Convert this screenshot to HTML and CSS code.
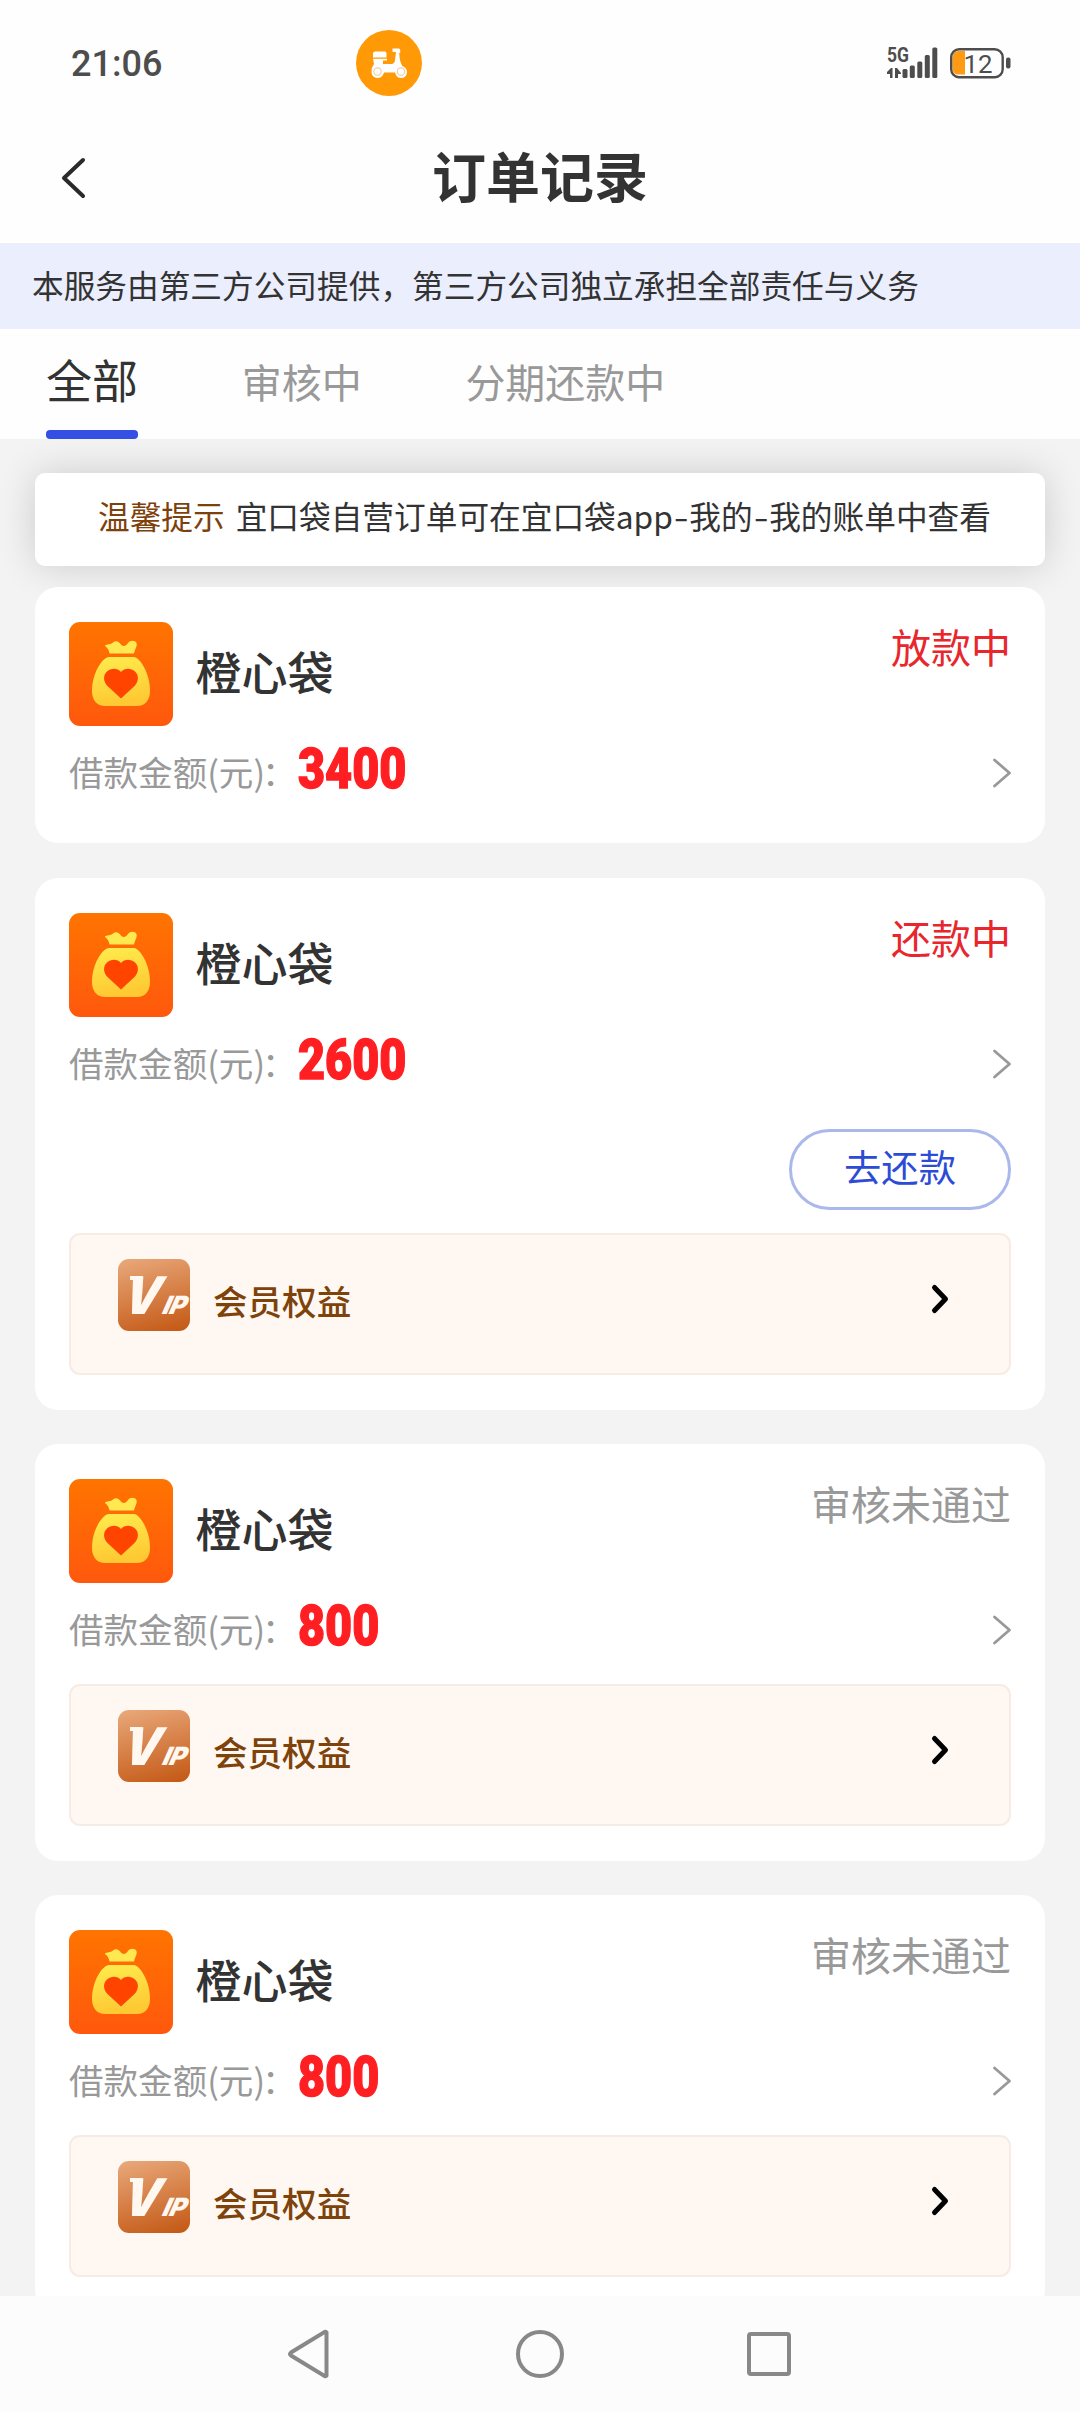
FILE: index.html
```
<!DOCTYPE html>
<html lang="zh-CN">
<head>
<meta charset="utf-8">
<title>订单记录</title>
<link rel="stylesheet" href="styles.css">
</head>
<body>
<svg class="defs" width="0" height="0" aria-hidden="true">
  <defs>
    <linearGradient id="orange" x1="0" y1="0" x2="0" y2="1"><stop offset="0" stop-color="#ff7400"/><stop offset="1" stop-color="#ff580d"/></linearGradient>
    <linearGradient id="gold" x1="0" y1="0" x2="0.2" y2="1"><stop offset="0" stop-color="#ffec4e"/><stop offset="1" stop-color="#fec933"/></linearGradient>
  </defs>
  <symbol id="bag" viewBox="0 0 104 104">
    <rect width="104" height="104" rx="11" fill="url(#orange)"/>
    <path d="M36 24C36 21.800 40 23.500 44 20.500C47 18 50 19.500 52 22.500C54 25 57 24 59 21C61 18 66 18 67.500 21C68.500 24 66 27 65 31.500H40.500C40 28 38.500 26 36 24Z" fill="#ffe850"/>
    <path d="M40 35H65C70 35 81 50 81 69C81 78 76 84 68 84H36C28 84 23 78 23 69C23 50 34 35 40 35Z" fill="url(#gold)"/>
    <path d="M52 76.500L38.500 64C34 59.500 34 53 38 49.500C42.500 45.500 48.500 46 52 50C55.500 46 61.500 45.500 66 49.500C70 53 70 59.500 65.500 64Z" fill="#ff4400"/>
  </symbol>
  <symbol id="more" viewBox="0 0 20 32"><path d="M2.500 3L17.500 16L2.500 29" fill="none" stroke="#999" stroke-width="2.800" stroke-linecap="round" stroke-linejoin="round"/></symbol>
  <symbol id="enter" viewBox="0 0 20 32"><path d="M4.500 4.500L15.500 16L4.500 27.500" fill="none" stroke="#000" stroke-width="5" stroke-linecap="round" stroke-linejoin="round"/></symbol>
</svg>

<div class="screen">
  <header class="status-bar">
    <span class="clock">21:06</span>
    <svg class="scooter" viewBox="0 0 66 66">
      <circle cx="33" cy="33" r="33" fill="#ff9905"/>
      <path d="M17 27.500V23.500Q17 21.500 19.500 21.500H29Q30.500 21.500 30.500 23.500V27.500ZM17 28.800H31V30.500H27V34H35.500Q38.500 34 39 30L40 22H36.500V18.500H43Q44 18.500 44.200 20V23H43.200Q43.500 32 46.500 36Q51 38 51 42Q50.500 48 45 48Q40.500 48 39 42.500H28Q26.500 48 21 48Q15.500 47 15.500 42Q15.500 37 18 34Z" fill="#fff"/>
      <circle cx="21.500" cy="41.500" r="3.700" fill="#fff" stroke="#f3cfa0" stroke-width="1.200"/>
      <circle cx="45" cy="41.500" r="3.700" fill="#fff" stroke="#f3cfa0" stroke-width="1.200"/>
    </svg>
    <svg class="signals" viewBox="0 0 128 40">
      <text x="0" y="18.500" class="net" textLength="22" lengthAdjust="spacingAndGlyphs">5G</text>
      <g transform="translate(0 4)">
        <g fill="#4d4d4d">
          <path d="M0 25L4 21H5.500V31H3V27H0ZM8 21H10L14 26V27H11V31H8Z"/>
          <rect x="15.500" y="22" width="5" height="9" rx="1.500"/><rect x="22.800" y="18.500" width="5" height="12.500" rx="1.500"/><rect x="30.300" y="14.500" width="5" height="16.500" rx="1.500"/><rect x="37.800" y="8" width="5" height="23" rx="1.500"/><rect x="45.300" y="0.500" width="5" height="30.500" rx="1.500"/>
          <rect x="119" y="10.500" width="4.500" height="11" rx="2"/>
        </g>
        <path d="M78 4H71Q65.500 5 65.500 11V21Q65.500 27 71 27.500H78Z" fill="#ff9a13"/>
        <rect x="64.200" y="2.200" width="51.500" height="28" rx="8" fill="none" stroke="#4d4d4d" stroke-width="2.400"/>
        <text x="76.500" y="25.600" class="level" textLength="29" lengthAdjust="spacingAndGlyphs">12</text>
      </g>
    </svg>
  </header>

  <div class="title-bar">
    <svg class="back" viewBox="0 0 26 42"><path d="M22 3L3 21L22 39" fill="none" stroke="#2a2a2a" stroke-width="4" stroke-linecap="round" stroke-linejoin="round"/></svg>
    <h1>订单记录</h1>
  </div>

  <div class="banner">本服务由第三方公司提供，第三方公司独立承担全部责任与义务</div>

  <nav class="tabs">
    <span class="tab active">全部</span>
    <span class="tab">审核中</span>
    <span class="tab">分期还款中</span>
  </nav>

  <main class="content">
    <div class="notice"><span class="tip">温馨提示</span><span>宜口袋自营订单可在宜口袋app<span class="dash">-</span>我的<span class="dash">-</span>我的账单中查看</span></div>

    <section class="card">
      <div class="head"><svg class="logo"><use href="#bag"/></svg><span class="name">橙心袋</span><span class="state urgent">放款中</span></div>
      <div class="amount"><span class="label">借款金额(元)<span class="colon">：</span></span><span class="value">3400</span><svg class="more"><use href="#more"/></svg></div>
    </section>

    <section class="card">
      <div class="head"><svg class="logo"><use href="#bag"/></svg><span class="name">橙心袋</span><span class="state urgent">还款中</span></div>
      <div class="amount"><span class="label">借款金额(元)<span class="colon">：</span></span><span class="value">2600</span><svg class="more"><use href="#more"/></svg></div>
      <div class="actions"><button class="repay">去还款</button></div>
      <div class="member"><div class="vip"><span class="vip-v">V</span><span class="vip-ip">IP</span></div><span class="member-name">会员权益</span><svg class="enter"><use href="#enter"/></svg></div>
    </section>

    <section class="card">
      <div class="head"><svg class="logo"><use href="#bag"/></svg><span class="name">橙心袋</span><span class="state">审核未通过</span></div>
      <div class="amount"><span class="label">借款金额(元)<span class="colon">：</span></span><span class="value">800</span><svg class="more"><use href="#more"/></svg></div>
      <div class="member"><div class="vip"><span class="vip-v">V</span><span class="vip-ip">IP</span></div><span class="member-name">会员权益</span><svg class="enter"><use href="#enter"/></svg></div>
    </section>

    <section class="card">
      <div class="head"><svg class="logo"><use href="#bag"/></svg><span class="name">橙心袋</span><span class="state">审核未通过</span></div>
      <div class="amount"><span class="label">借款金额(元)<span class="colon">：</span></span><span class="value">800</span><svg class="more"><use href="#more"/></svg></div>
      <div class="member"><div class="vip"><span class="vip-v">V</span><span class="vip-ip">IP</span></div><span class="member-name">会员权益</span><svg class="enter"><use href="#enter"/></svg></div>
    </section>
  </main>

  <footer class="nav-bar">
    <svg viewBox="0 0 56 56"><path d="M38.500 6.500V49.500Q38 50.500 36.500 50L3 29.500Q1 28 3 26.500L36.500 6Q38 5.500 38.500 6.500Z" transform="translate(5 0)"/></svg>
    <svg viewBox="0 0 56 56"><circle cx="28" cy="28" r="22"/></svg>
    <svg viewBox="0 0 56 56"><rect x="8" y="8" width="40" height="40" rx="2"/></svg>
  </footer>
</div>
</body>
</html>
```

FILE: styles.css
```
* { box-sizing: border-box; }

body {
  margin: 0;
  background: #fefefe;
  color: #333;
  font-family: "Noto Sans CJK SC", "Noto Sans", sans-serif;
}

.defs { position: absolute; }

.screen {
  width: 1080px;
  height: 2412px;
  display: flex;
  flex-direction: column;
  overflow: hidden;
}

.status-bar {
  flex: none;
  height: 126px;
  padding: 0 65px 0 71px;
  display: flex;
  align-items: center;
}

.clock {
  width: 285px;
  padding-top: 2px;
  color: #4d4d4d;
  font: 500 36px/40px Roboto, sans-serif;
}

.scooter { width: 66px; height: 66px; }

.signals { width: 128px; height: 40px; margin-left: auto; overflow: visible; }
.net { font: 700 20px Roboto, sans-serif; fill: #4d4d4d; }
.level { font: 400 26.500px Roboto, sans-serif; fill: #4d4d4d; }

.title-bar {
  flex: none;
  height: 117px;
  padding: 0 60px 14px;
  display: grid;
  grid-template-columns: 26px 1fr 26px;
  align-items: center;
}

.back { width: 26px; height: 42px; margin-left: 1px; }

h1 {
  margin: 0;
  padding-bottom: 6px;
  font-size: 54px;
  font-weight: 700;
  line-height: 60px;
  text-align: center;
}

.banner {
  flex: none;
  height: 86px;
  padding-left: 32px;
  background: #ebeefd;
  font-size: 31.680px;
  line-height: 83px;
  white-space: nowrap;
}

.tabs {
  flex: none;
  height: 110px;
  padding-left: 46px;
  display: flex;
  gap: 103.700px;
  position: relative;
  z-index: 1;
  background: #fefefe;
}

.tab { color: #999; font-size: 40px; line-height: 104px; }

.tab.active {
  display: flex;
  flex-direction: column;
  color: #333;
  font-size: 46px;
  line-height: 99px;
}

.tab.active::after {
  content: "";
  height: 9px;
  margin-top: 2px;
  border-radius: 4px;
  background: #344fe4;
}

.content {
  flex: 1;
  min-height: 0;
  padding: 34px 35px 0;
  overflow: hidden;
  background: #f3f3f3;
}

.notice {
  height: 93px;
  margin-bottom: 21px;
  padding-left: 63px;
  display: flex;
  gap: 11px;
  border-radius: 10px;
  background: #fff;
  box-shadow: 0 0 38px rgba(0, 0, 0, 0.16);
  font-size: 31.680px;
  line-height: 85px;
  white-space: nowrap;
}

.tip { color: #7d410c; }
.dash { display: inline-block; width: 16.500px; text-align: center; transform: scaleX(1.35); }

.card {
  margin-bottom: 34px;
  padding: 35px 34px;
  position: relative;
  border-radius: 23px;
  background: #fff;
}

.card:first-of-type { margin-bottom: 35px; }

.head { height: 104px; display: flex; align-items: center; }
.logo { width: 104px; height: 104px; }
.name { margin-left: 22.500px; font-size: 46px; font-weight: 500; line-height: 60px; padding-bottom: 8px; }

.state {
  margin-left: auto;
  align-self: flex-start;
  color: #999;
  font-size: 40px;
  line-height: 48px;
}

.state.urgent { color: #e8262c; }

.amount { height: 82px; padding-top: 12px; display: flex; align-items: center; }
.label { width: 229px; color: #999; font-size: 34.560px; line-height: 50px; padding-bottom: 5px; white-space: nowrap; }
.colon { margin-left: -3px; }

.value {
  color: #ff1f22;
  font: 900 55px/60px Roboto, sans-serif;
  padding-bottom: 9px;
  transform: scaleX(0.85);
  transform-origin: left;
  -webkit-text-stroke: 1.400px #ff1f22;
}

.more { width: 20px; height: 32px; margin: 0 -1px 0 auto; }

.actions { margin: 30px 0 23px; display: flex; justify-content: flex-end; }

.repay {
  width: 222px;
  height: 81px;
  padding: 0 0 8px;
  border: 3px solid #abb8eb;
  border-radius: 41px;
  background: #fff;
  color: #2c4cd6;
  font: 400 37.300px/60px "Noto Sans CJK SC", sans-serif;
}

.member {
  height: 142px;
  margin-top: 19px;
  padding: 24px 59px 0 47px;
  display: flex;
  align-items: flex-start;
  border: 2px solid #f7ece5;
  border-radius: 11px;
  background: #fff7f1;
}

.actions + .member { margin-top: 0; }

.vip {
  width: 72px;
  height: 72px;
  padding-left: 2px;
  display: flex;
  align-items: baseline;
  position: relative;
  border-radius: 11px;
  background: linear-gradient(165deg, #e9a97b, #c35713);
  color: #fff8f1;
  font-family: Inter, sans-serif;
  font-weight: 900;
  line-height: 74px;
}

/* slab on the upper left arm of the V */
.vip::before {
  content: "";
  width: 12px;
  height: 4px;
  position: absolute;
  left: 12px;
  top: 17px;
  background: #fff8f1;
}

.vip-v { width: 28px; font-size: 52px; transform: skewX(-18deg) scaleX(0.88); transform-origin: 0 54px; }
.vip-ip { font-size: 25px; letter-spacing: -0.500px; transform: skewX(-24deg); transform-origin: 0 100%; }

.member-name { margin: 16px 0 0 23px; color: #7d430b; font-size: 34.560px; font-weight: 500; line-height: 50px; }
.enter { width: 20px; height: 32px; margin: 24px 0 0 auto; }

.nav-bar {
  flex: none;
  height: 116px;
  display: flex;
  justify-content: center;
  align-items: center;
  gap: 173px;
  background: #fcfcfc;
}

.nav-bar svg { width: 56px; height: 56px; fill: none; stroke: #888; stroke-width: 4; }
```
